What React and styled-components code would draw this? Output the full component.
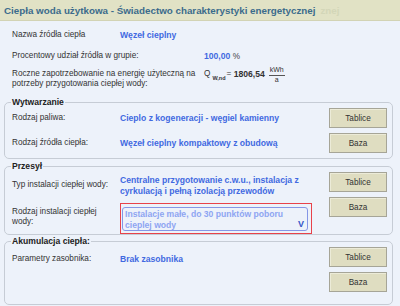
import React from 'react'
import styled, { createGlobalStyle } from 'styled-components'

const GlobalStyle = createGlobalStyle`
    body{
        margin: 0;
        background: #edf2fa;
        font-family: "Liberation Sans", Arial, sans-serif;
        color: #333;
    }
`

const TitleBar = styled.div`
    height: 20px;
    background: #e1e2c5;
    border-bottom: 1px solid #d2d3b4;
    display: flex;
    align-items: center;
    padding-left: 4px;
    font-size: 9.8px;
    font-weight: bold;
    color: #3b6b8c;
    white-space: nowrap;
`
const Ghost = styled.span`
    color: #d3d6b8;
    margin-left: 5px;
`

const Info = styled.div`
    padding: 3px 0 0 12px;
`
const InfoRow = styled.div`
    display: grid;
    grid-template-columns: ${p => p.labelWidth}px 1fr;
    align-items: ${p => p.top ? 'start' : 'center'};
    height: ${p => p.h}px;
    margin-top: ${p => p.mt || 0}px;
    font-size: 8.2px;
    line-height: 10px;
`

const Label = styled.div`
    font-size: 8.2px;
    line-height: 10px;
    color: #333;
    padding-right: 4px;
`
const Value = styled.div`
    font-size: 8.6px;
    font-weight: bold;
    color: #4169e1;
    line-height: 11px;
`
const Percent = styled.span`
    font-weight: normal;
    color: #444;
    font-size: 8.2px;
`

const Formula = styled.div`
    display: flex;
    align-items: flex-start;
    font-size: 8.2px;
    color: #333;
    white-space: nowrap;
`
const Sub = styled.span`
    font-size: 5.5px;
    font-weight: bold;
    margin: 4px 1px 0 2px;
`
const Amount = styled.span`
    font-weight: bold;
    font-size: 8.6px;
    margin-right: 4px;
`
const Fraction = styled.span`
    display: inline-flex;
    flex-direction: column;
    align-items: center;
    margin-top: -3px;
    font-size: 7px;
    line-height: 8.5px;
    span:first-child{
        border-bottom: 1px solid #555;
        padding: 0 1px;
    }
`

const Box = styled.fieldset`
    margin: ${p => p.mt || 0}px 7px 0 4px;
    padding: 0 5px ${p => p.pb || 0}px 7px;
    border: 1px solid #c6ccd5;
    border-radius: 5px;
    min-inline-size: 0;
    legend{
        font-size: 8.6px;
        font-weight: bold;
        color: #222;
        line-height: 12px;
        padding: 0 1px;
        margin-left: -1px;
    }
`
const Rows = styled.div`
    display: flex;
    flex-direction: column;
    gap: ${p => p.gap || 0}px;
`
const Row = styled.div`
    display: grid;
    grid-template-columns: 108px 1fr 58px;
    align-items: ${p => p.top ? 'start' : 'center'};
    min-height: ${p => p.h || 20}px;
`
const Pad = styled.div`
    padding-top: ${p => p.pt || 0}px;
`
const Buttons = styled.div`
    display: flex;
    flex-direction: column;
    gap: 5px;
    align-self: start;
`
const Button = styled.button`
    width: 58px;
    height: 20px;
    background: #dfddc1;
    border: 1px solid #a6a597;
    box-shadow: inset 1px 1px 0 #ecebd8;
    font-family: "Liberation Sans", Arial, sans-serif;
    font-size: 8.2px;
    color: #333;
    padding: 0;
`

const Highlight = styled.div`
    margin-top: 6px;
    border: 1px solid #e8424a;
    padding: 3px 3px 2px 1px;
    width: 186px;
`
const Select = styled.div`
    height: 22px;
    border: 1px solid #8596e6;
    border-radius: 3px;
    display: flex;
    align-items: flex-end;
    justify-content: space-between;
    padding: 0 3px 0 2px;
    font-size: 8.6px;
    font-weight: bold;
    line-height: 10.5px;
    color: #8ea5f2;
`
const Arrow = styled.span`
    color: #3556c8;
    font-size: 9px;
    line-height: 10px;
    margin-bottom: 1px;
`

const App = () => {
    return(
        <>
            <GlobalStyle/>
            <TitleBar>
                Ciepła woda użytkowa - Świadectwo charakterystyki energetycznej<Ghost>znej</Ghost>
            </TitleBar>
            <Info>
                <InfoRow labelWidth={108} h={22}>
                    <Label>Nazwa źródła ciepła</Label>
                    <Value>Węzeł cieplny</Value>
                </InfoRow>
                <InfoRow labelWidth={192} h={20}>
                    <Label>Procentowy udział źródła w grupie:</Label>
                    <Value>100,00 <Percent>%</Percent></Value>
                </InfoRow>
                <InfoRow labelWidth={192} h={20} mt={3} top>
                    <Label>Roczne zapotrzebowanie na energię użyteczną na<br/>potrzeby przygotowania ciepłej wody:</Label>
                    <Formula>
                        Q<Sub>W,nd</Sub>= <Amount>&nbsp;1806,54</Amount>
                        <Fraction><span>kWh</span><span>a</span></Fraction>
                    </Formula>
                </InfoRow>
            </Info>

            <Box mt={7} pb={5}>
                <legend>Wytwarzanie</legend>
                <Rows gap={5}>
                    <Row>
                        <Label>Rodzaj paliwa:</Label>
                        <Value>Cieplo z kogeneracji - węgiel kamienny</Value>
                        <Button>Tablice</Button>
                    </Row>
                    <Row>
                        <Label>Rodzaj źródła ciepła:</Label>
                        <Value>Węzeł cieplny kompaktowy z obudową</Value>
                        <Button>Baza</Button>
                    </Row>
                </Rows>
            </Box>

            <Box mt={1}>
                <legend>Przesył</legend>
                <Rows>
                    <Row h={24} top>
                        <Pad pt={8}><Label>Typ instalacji ciepłej wody:</Label></Pad>
                        <Pad pt={3}><Value>Centralne przygotowanie c.w.u., instalacja z<br/>cyrkulacją i pełną izolacją przewodów</Value></Pad>
                        <Button>Tablice</Button>
                    </Row>
                    <Row top>
                        <Pad pt={10}><Label>Rodzaj instalacji ciepłej<br/>wody:</Label></Pad>
                        <Highlight>
                            <Select>
                                <span>Instalacje małe, do 30 punktów poboru<br/>cieplej wody</span>
                                <Arrow>V</Arrow>
                            </Select>
                        </Highlight>
                        <Button>Baza</Button>
                    </Row>
                </Rows>
            </Box>

            <Box pb={12}>
                <legend>Akumulacja ciepła:</legend>
                <Row top>
                    <Pad pt={7}><Label>Parametry zasobnika:</Label></Pad>
                    <Pad pt={7}><Value>Brak zasobnika</Value></Pad>
                    <Buttons>
                        <Button>Tablice</Button>
                        <Button>Baza</Button>
                    </Buttons>
                </Row>
            </Box>
        </>
    )
}

export default App
